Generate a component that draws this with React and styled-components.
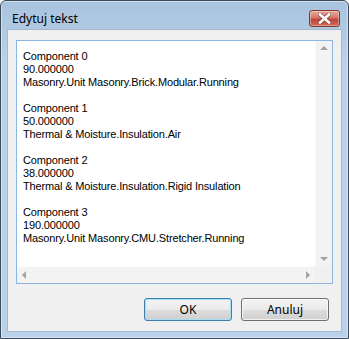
import React from 'react'
import styled, { createGlobalStyle } from 'styled-components'

const GlobalStyle = createGlobalStyle`
  html, body {
    margin: 0;
    padding: 0;
    background: #fff;
  }
  * { box-sizing: border-box; }
`

const Window = styled.div`
  width: 349px;
  height: 339px;
  display: flex;
  flex-direction: column;
  border: 1px solid #3b4a59;
  border-radius: 6px 6px 0 0;
  background: linear-gradient(#a9c3de, #b9d1ea 60px, #b9d1ea);
  box-shadow: inset 0 0 0 1px rgba(255, 255, 255, 0.45);
  overflow: hidden;
`

const TitleBar = styled.div`
  height: 28px;
  flex: none;
  display: flex;
  align-items: center;
  justify-content: space-between;
  padding: 6px 8px 0 11px;
`

const Title = styled.span`
  font-family: "Noto Sans", "Open Sans", sans-serif;
  font-size: 12px;
  color: #000;
`

const CloseButton = styled.div`
  width: 31px;
  height: 17px;
  border: 1px solid #7f3a30;
  border-radius: 3px;
  display: flex;
  align-items: center;
  justify-content: center;
  background: linear-gradient(#e9a99b 0%, #d47869 45%, #c0453a 55%, #cf6a55 100%);
  box-shadow: inset 0 0 0 1px rgba(255, 255, 255, 0.35);
`

const Frame = styled.div`
  flex: 1;
  display: flex;
  padding: 0 6px 6px;
`

const Client = styled.div`
  flex: 1;
  display: flex;
  flex-direction: column;
  background: #f0f0f0;
  border: 1px solid #a3b9d0;
  padding: 10px 8px 10px;
`

const TextBox = styled.div`
  height: 244px;
  flex: none;
  border: 1px solid #8cb5e0;
  background: #fff;
  display: grid;
  grid-template-columns: 1fr 17px;
  grid-template-rows: 1fr 17px;
`

const Content = styled.div`
  padding: 9px 0 0 6px;
  font-family: "Liberation Sans", Arial, sans-serif;
  font-size: 11px;
  line-height: 13px;
  letter-spacing: -0.15px;
  color: #000;
  white-space: pre;
  overflow: hidden;
  -webkit-font-smoothing: none;
`

const Line = styled.div`
  height: 13px;
`

const VScroll = styled.div`
  background: #f3f3f3;
  border-left: 1px solid #fbfbfb;
  display: flex;
  flex-direction: column;
  justify-content: space-between;
  align-items: center;
  padding: 5px 0;
`

const HScroll = styled.div`
  background: #f3f3f3;
  border-top: 1px solid #fbfbfb;
  display: flex;
  justify-content: space-between;
  align-items: center;
  padding: 0 5px;
`

const Corner = styled.div`
  background: #f0f0f0;
`

const Arrow = styled.span`
  width: 0;
  height: 0;
  border-style: solid;
  border-color: transparent;
  ${p => p.$dir === 'up' && 'border-width: 0 4px 4px; border-bottom-color: #a3a3a3;'}
  ${p => p.$dir === 'down' && 'border-width: 4px 4px 0; border-top-color: #a3a3a3;'}
  ${p => p.$dir === 'left' && 'border-width: 4px 4px 4px 0; border-right-color: #a3a3a3;'}
  ${p => p.$dir === 'right' && 'border-width: 4px 0 4px 4px; border-left-color: #a3a3a3;'}
`

const ButtonRow = styled.div`
  display: flex;
  justify-content: flex-end;
  gap: 9px;
  margin-top: 14px;
  padding-right: 4px;
`

const Button = styled.button`
  width: 88px;
  height: 23px;
  padding: 0;
  border-radius: 3px;
  font-family: "Noto Sans", "Open Sans", sans-serif;
  font-size: 12px;
  color: #000;
  border: 1px solid ${p => (p.$default ? '#3c7fb1' : '#707070')};
  background: linear-gradient(#f2f2f2 0%, #ebebeb 50%, #dddddd 51%, #cfcfcf 100%);
  box-shadow: inset 0 0 0 1px ${p => (p.$default ? '#a6dcf5' : 'rgba(255,255,255,0.7)')};
`

const lines = [
  'Component 0',
  '90.000000',
  'Masonry.Unit Masonry.Brick.Modular.Running',
  '',
  'Component 1',
  '50.000000',
  'Thermal & Moisture.Insulation.Air',
  '',
  'Component 2',
  '38.000000',
  'Thermal & Moisture.Insulation.Rigid Insulation',
  '',
  'Component 3',
  '190.000000',
  'Masonry.Unit Masonry.CMU.Stretcher.Running'
]

export default function App () {
  return (
    <>
      <GlobalStyle />
      <Window>
        <TitleBar>
          <Title>Edytuj tekst</Title>
          <CloseButton>
            <svg width='13' height='11' viewBox='0 0 13 11'>
              <path
                d='M2 1.5 L11 9.5 M11 1.5 L2 9.5'
                stroke='#5a2a24'
                strokeWidth='4.2'
                strokeLinecap='square'
                opacity='0.55'
              />
              <path
                d='M2 1.5 L11 9.5 M11 1.5 L2 9.5'
                stroke='#fff'
                strokeWidth='2.6'
                strokeLinecap='square'
              />
            </svg>
          </CloseButton>
        </TitleBar>
        <Frame>
          <Client>
            <TextBox>
              <Content>
                {lines.map((l, i) => <Line key={i}>{l}</Line>)}
              </Content>
              <VScroll>
                <Arrow $dir='up' />
                <Arrow $dir='down' />
              </VScroll>
              <HScroll>
                <Arrow $dir='left' />
                <Arrow $dir='right' />
              </HScroll>
              <Corner />
            </TextBox>
            <ButtonRow>
              <Button $default>OK</Button>
              <Button>Anuluj</Button>
            </ButtonRow>
          </Client>
        </Frame>
      </Window>
    </>
  )
}
